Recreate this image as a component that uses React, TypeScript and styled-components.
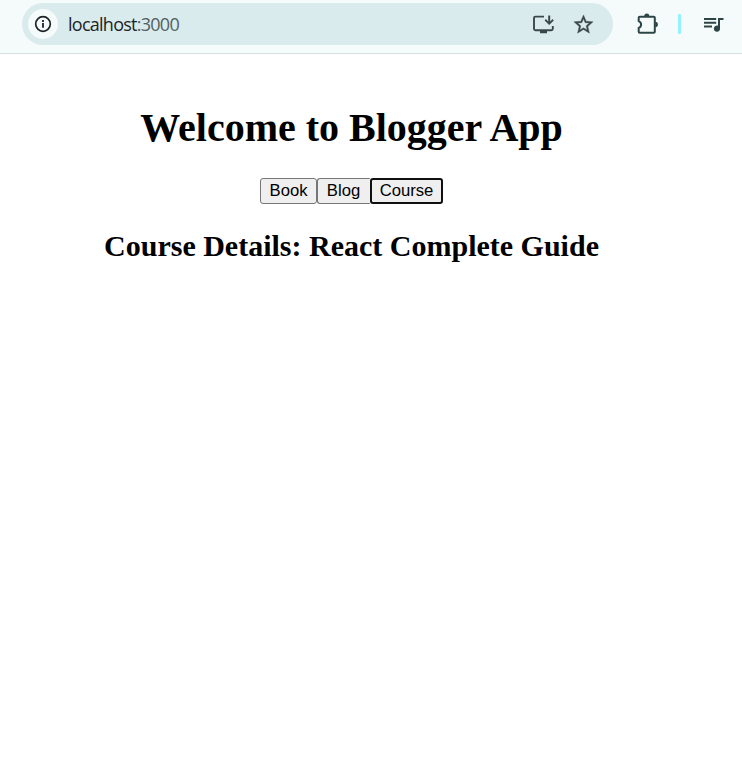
import React, { useState } from "react";
import styled, { createGlobalStyle } from "styled-components";

const GlobalStyle = createGlobalStyle`
  * { box-sizing: border-box; }
  body { margin: 0; background: #fff; overflow: hidden; }
`;

const Window = styled.div`
  width: 742px;
  height: 781px;
  display: flex;
  flex-direction: column;
  background: #fff;
`;

const Toolbar = styled.header`
  height: 54px;
  flex: none;
  display: flex;
  align-items: flex-start;
  padding: 3px 0 0 22px;
  background: #f4fbfa;
  border-bottom: 1px solid #d3e0e0;
  color: #2e4548;
`;

const AddressBar = styled.div`
  width: 591px;
  height: 42px;
  display: flex;
  align-items: center;
  padding: 0 18px 0 6px;
  border-radius: 21px;
  background: #daebed;
  color: #3b484b;
`;

const SiteInfo = styled.span`
  width: 30px;
  height: 30px;
  display: flex;
  align-items: center;
  justify-content: center;
  border-radius: 50%;
  background: #f4fbfa;
  color: #1c2324;
`;

const Url = styled.span`
  flex: 1;
  margin-left: 10px;
  font: 18px/24px "Open Sans", sans-serif;
  letter-spacing: -0.74px;
  color: #1d2426;
`;

const Port = styled.span`
  color: #535f61;
`;

const Icon = styled.svg<{ $gap?: number }>`
  display: block;
  flex: none;
  fill: currentColor;
  margin-left: ${({ $gap = 0 }) => $gap}px;
`;

const Actions = styled.div`
  height: 42px;
  display: flex;
  align-items: center;
  margin-left: 22px;
`;

const Divider = styled.span`
  width: 3px;
  height: 20px;
  margin: 0 20px 0 19px;
  border-radius: 1px;
  background: #94f2fb;
`;

const Page = styled.main`
  width: 703px;
  display: flex;
  flex-direction: column;
  align-items: center;
  padding-top: 51px;
  color: #000;
  font-family: "Liberation Serif", serif;
`;

const Title = styled.h1`
  margin: 0;
  font-size: 40px;
  line-height: 46px;
  white-space: nowrap;
`;

const ButtonRow = styled.div`
  display: flex;
  margin-top: 27px;
`;

const TabButton = styled.button<{ $width: number; $active: boolean }>`
  width: ${({ $width }) => $width}px;
  height: 26px;
  padding: 0 0 1px;
  border: ${({ $active }) => ($active ? "2px solid #101010" : "1px solid #767676")};
  border-radius: 3px;
  outline: none;
  background: #efefef;
  color: #000;
  font: 16.67px/22px "Liberation Sans", sans-serif;

  &:has(+ [aria-pressed="true"]) {
    padding-right: 1px;
    border-right: none;
    border-top-right-radius: 1px;
    border-bottom-right-radius: 1px;
  }
`;

const Details = styled.h2`
  margin: 25px 0 0;
  font-size: 30px;
  line-height: 34px;
  white-space: nowrap;
`;

const tabs = [
  { name: "Book", width: 57, details: "Book Details" },
  { name: "Blog", width: 53, details: "Blog Details" },
  { name: "Course", width: 73, details: "Course Details: React Complete Guide" },
];

export default function App() {
  const [active, setActive] = useState(2);
  return (
    <Window>
      <GlobalStyle />
      <Toolbar>
        <AddressBar>
          <SiteInfo>
            <Icon width="18" height="18" viewBox="0 0 18 18">
              <circle cx="9" cy="9" r="7.3" fill="none" stroke="currentColor" strokeWidth="1.7" />
              <path d="M8.1 8.1h1.8v4.7H8.1zM8.1 5.1h1.8v1.8H8.1z" />
            </Icon>
          </SiteInfo>
          <Url>localhost<Port>:3000</Port></Url>
          <Icon width="24" height="24" viewBox="0 0 24 24">
            <path d="M13 4.6H4.5Q3 4.6 3 6.1V16.8Q3 18.3 4.5 18.3H20.3Q21.8 18.3 21.8 16.8V14" fill="none" stroke="currentColor" strokeWidth="1.9" />
            <path d="M9 18h7v3.2H9zM17.2 3.6h2v5.8l2.3-2.3 1.3 1.4-4.6 4.6-4.6-4.6 1.3-1.4 2.3 2.3z" />
          </Icon>
          <Icon $gap={17} width="23" height="23" viewBox="0 0 24 24">
            <path stroke="currentColor" strokeWidth="0.4" d="M22 9.24l-7.19-.62L12 2 9.19 8.63 2 9.24l5.46 4.73L5.82 21 12 17.27 18.18 21l-1.63-7.03L22 9.24zM12 15.4l-3.76 2.27 1-4.28-3.32-2.88 4.38-.38L12 6.1l1.71 4.04 4.38.38-3.32 2.88 1 4.28L12 15.4z" />
          </Icon>
        </AddressBar>
        <Actions>
          <Icon width="24" height="24" viewBox="0 0 24 24">
            <path d="M4.5 4.8H18.8Q19.8 4.8 19.8 5.8V19.7Q19.8 20.7 18.8 20.7H4.7Q3.7 20.7 3.7 19.7V16C6.9 14.9 6.9 10.2 3.7 9.1V5.8Q3.7 4.8 4.7 4.8Z" fill="none" stroke="currentColor" strokeWidth="2" />
            <path d="M9.2 4.4a2.6 2.9 0 0 1 5.2 0zM20.3 9.8a2.6 2.6 0 0 1 0 5.2z" />
          </Icon>
          <Divider />
          <Icon width="24" height="24" viewBox="0 0 24 24">
            <path d="M15.2 6H3v2h12.2V6zm0 3.7H3v2h12.2v-2zM3 15.6h8v-2H3v2zM17 6v7.8c-.31-.11-.65-.18-1-.18-1.66 0-3.1 1.34-3.1 3.1s1.34 3.1 3.1 3.1 3-1.34 3-3.1V8h3.5V6h-5.5z" />
          </Icon>
        </Actions>
      </Toolbar>
      <Page>
        <Title>Welcome to Blogger App</Title>
        <ButtonRow>
          {tabs.map((tab, i) => (
            <TabButton
              key={tab.name}
              $width={tab.width}
              $active={i === active}
              aria-pressed={i === active}
              onClick={() => setActive(i)}
            >
              {tab.name}
            </TabButton>
          ))}
        </ButtonRow>
        <Details>{tabs[active].details}</Details>
      </Page>
    </Window>
  );
}
